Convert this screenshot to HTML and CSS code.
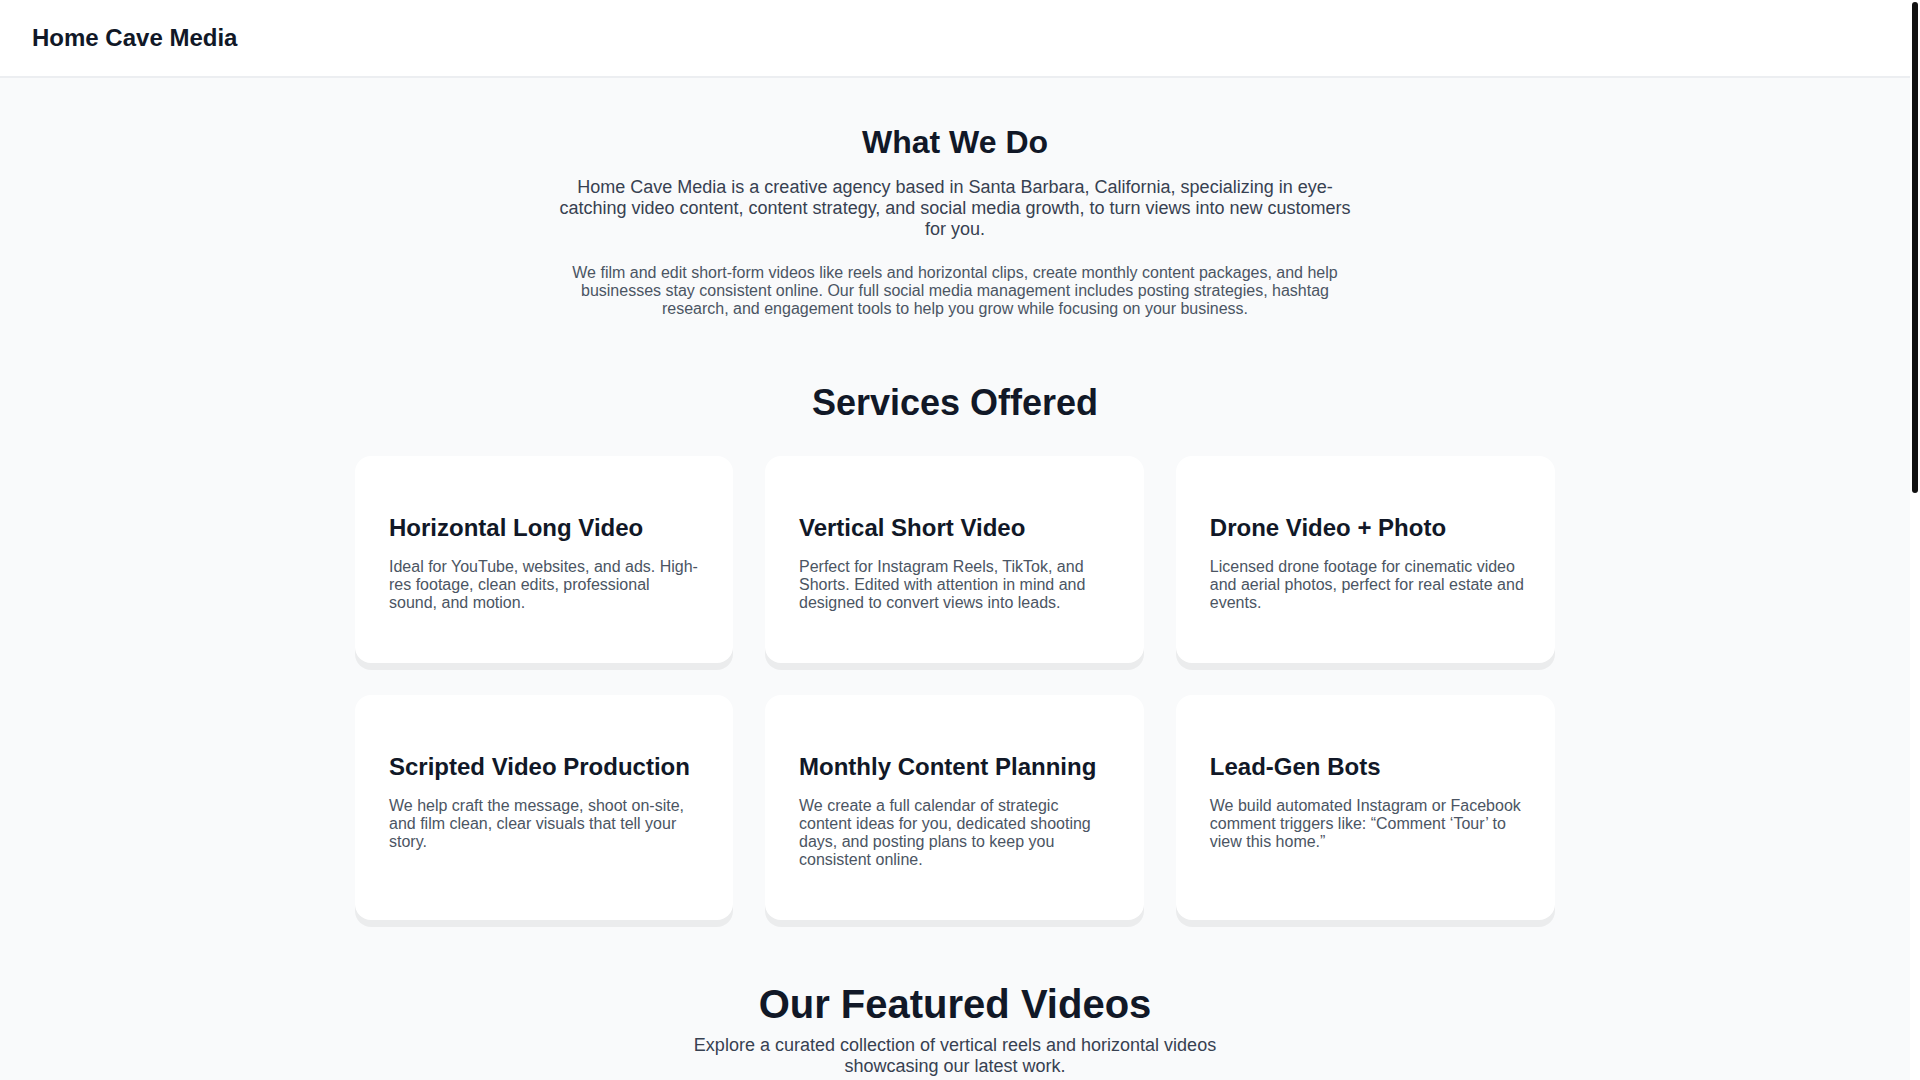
FILE: index.html
```html
<!DOCTYPE html>
<html lang="en">
<head>
<meta charset="utf-8">
<title>Home Cave Media</title>
<link rel="stylesheet" href="styles.css">
</head>
<body>
<header class="site-header">
  <div class="logo">Home Cave Media</div>
</header>

<main>
  <section class="about">
    <h2 class="about-title">What We Do</h2>
    <p class="about-lead">Home Cave Media is a creative agency based in Santa Barbara, California, specializing in eye-catching video content, content strategy, and social media growth, to turn views into new customers for you.</p>
    <p class="about-text">We film and edit short-form videos like reels and horizontal clips, create monthly content packages, and help businesses stay consistent online. Our full social media management includes posting strategies, hashtag research, and engagement tools to help you grow while focusing on your business.</p>
  </section>

  <section class="services">
    <h2 class="services-title">Services Offered</h2>
    <div class="service-grid">
      <div class="service-card">
        <h3 class="service-name">Horizontal Long Video</h3>
        <p class="service-desc">Ideal for YouTube, websites, and ads. High-res footage, clean edits, professional sound, and motion.</p>
      </div>
      <div class="service-card">
        <h3 class="service-name">Vertical Short Video</h3>
        <p class="service-desc">Perfect for Instagram Reels, TikTok, and Shorts. Edited with attention in mind and designed to convert views into leads.</p>
      </div>
      <div class="service-card">
        <h3 class="service-name">Drone Video + Photo</h3>
        <p class="service-desc">Licensed drone footage for cinematic video and aerial photos, perfect for real estate and events.</p>
      </div>
      <div class="service-card">
        <h3 class="service-name">Scripted Video Production</h3>
        <p class="service-desc">We help craft the message, shoot on-site, and film clean, clear visuals that tell your story.</p>
      </div>
      <div class="service-card">
        <h3 class="service-name">Monthly Content Planning</h3>
        <p class="service-desc">We create a full calendar of strategic content ideas for you, dedicated shooting days, and posting plans to keep you consistent online.</p>
      </div>
      <div class="service-card">
        <h3 class="service-name">Lead-Gen Bots</h3>
        <p class="service-desc">We build automated Instagram or Facebook comment triggers like: “Comment ‘Tour’ to view this home.”</p>
      </div>
    </div>
  </section>

  <section class="featured">
    <h2 class="featured-title">Our Featured Videos</h2>
    <p class="featured-sub">Explore a curated collection of vertical reels and horizontal videos showcasing our latest work.</p>
    <div class="video-grid">
      <div class="video-slot vertical"></div>
      <div class="video-slot vertical"></div>
      <div class="video-slot vertical"></div>
      <div class="video-slot horizontal"></div>
      <div class="video-slot horizontal"></div>
      <div class="video-slot horizontal"></div>
    </div>
  </section>
</main>

<div class="scrollbar" aria-hidden="true"><div class="scrollbar-thumb"></div></div>
</body>
</html>
```

FILE: styles.css
```css
html {
  background: #f9fafb;
}

body {
  margin: 0;
  padding-right: 10px;
  background: #f9fafb;
  font-family: "Liberation Sans", Arial, Helvetica, sans-serif;
  color: #111827;
}

.scrollbar {
  position: fixed;
  top: 0;
  right: 0;
  width: 10px;
  height: 100vh;
  background: #ffffff;
}

.scrollbar-thumb {
  margin: 2px 2px 0;
  width: 6px;
  height: 491px;
  border-radius: 3px;
  background: #111111;
}

.site-header {
  background: #ffffff;
  padding: 24px 32px;
  border-bottom: 2px solid #eceef1;
}

.logo {
  font-size: 24px;
  font-weight: 700;
  color: #111827;
}

.about {
  max-width: 800px;
  margin: 0 auto;
  padding-top: 46px;
  text-align: center;
}

.about-title {
  margin: 0 0 16px;
  font-size: 32px;
  font-weight: 700;
  color: #111827;
}

.about-lead {
  margin: 0 0 24px;
  font-size: 18px;
  color: #374151;
}

.about-text {
  margin: 0;
  font-size: 16px;
  color: #4b5563;
}

.services {
  max-width: 1200px;
  margin: 0 auto;
  padding-top: 64px;
}

.services-title {
  margin: 0 0 32px;
  text-align: center;
  font-size: 36px;
  font-weight: 700;
  color: #111827;
}

.service-grid {
  display: grid;
  grid-template-columns: 378fr 378.8fr 379.2fr;
  gap: 32px;
}

.service-card {
  background: #ffffff;
  border-radius: 16px;
  padding: 58px 31px 51px 34px;
  box-shadow: 0 7px 0 rgba(0, 0, 0, 0.055);
}

.service-name {
  margin: 0 0 16px;
  font-size: 24px;
  font-weight: 700;
  color: #111827;
}

.service-desc {
  margin: 0;
  font-size: 16px;
  color: #4b5563;
}

.featured {
  max-width: 1200px;
  margin: 0 auto;
  padding: 62px 0 80px;
  text-align: center;
}

.featured-title {
  margin: 0 0 8px;
  font-size: 40px;
  font-weight: 700;
  color: #111827;
}

.featured-sub {
  max-width: 576px;
  margin: 0 auto;
  font-size: 18px;
  color: #374151;
}

.video-grid {
  margin-top: 40px;
  display: grid;
  grid-template-columns: repeat(3, 1fr);
  gap: 32px;
}

.video-slot {
  border-radius: 16px;
}

.video-slot.vertical {
  height: 620px;
}

.video-slot.horizontal {
  height: 460px;
}
```
